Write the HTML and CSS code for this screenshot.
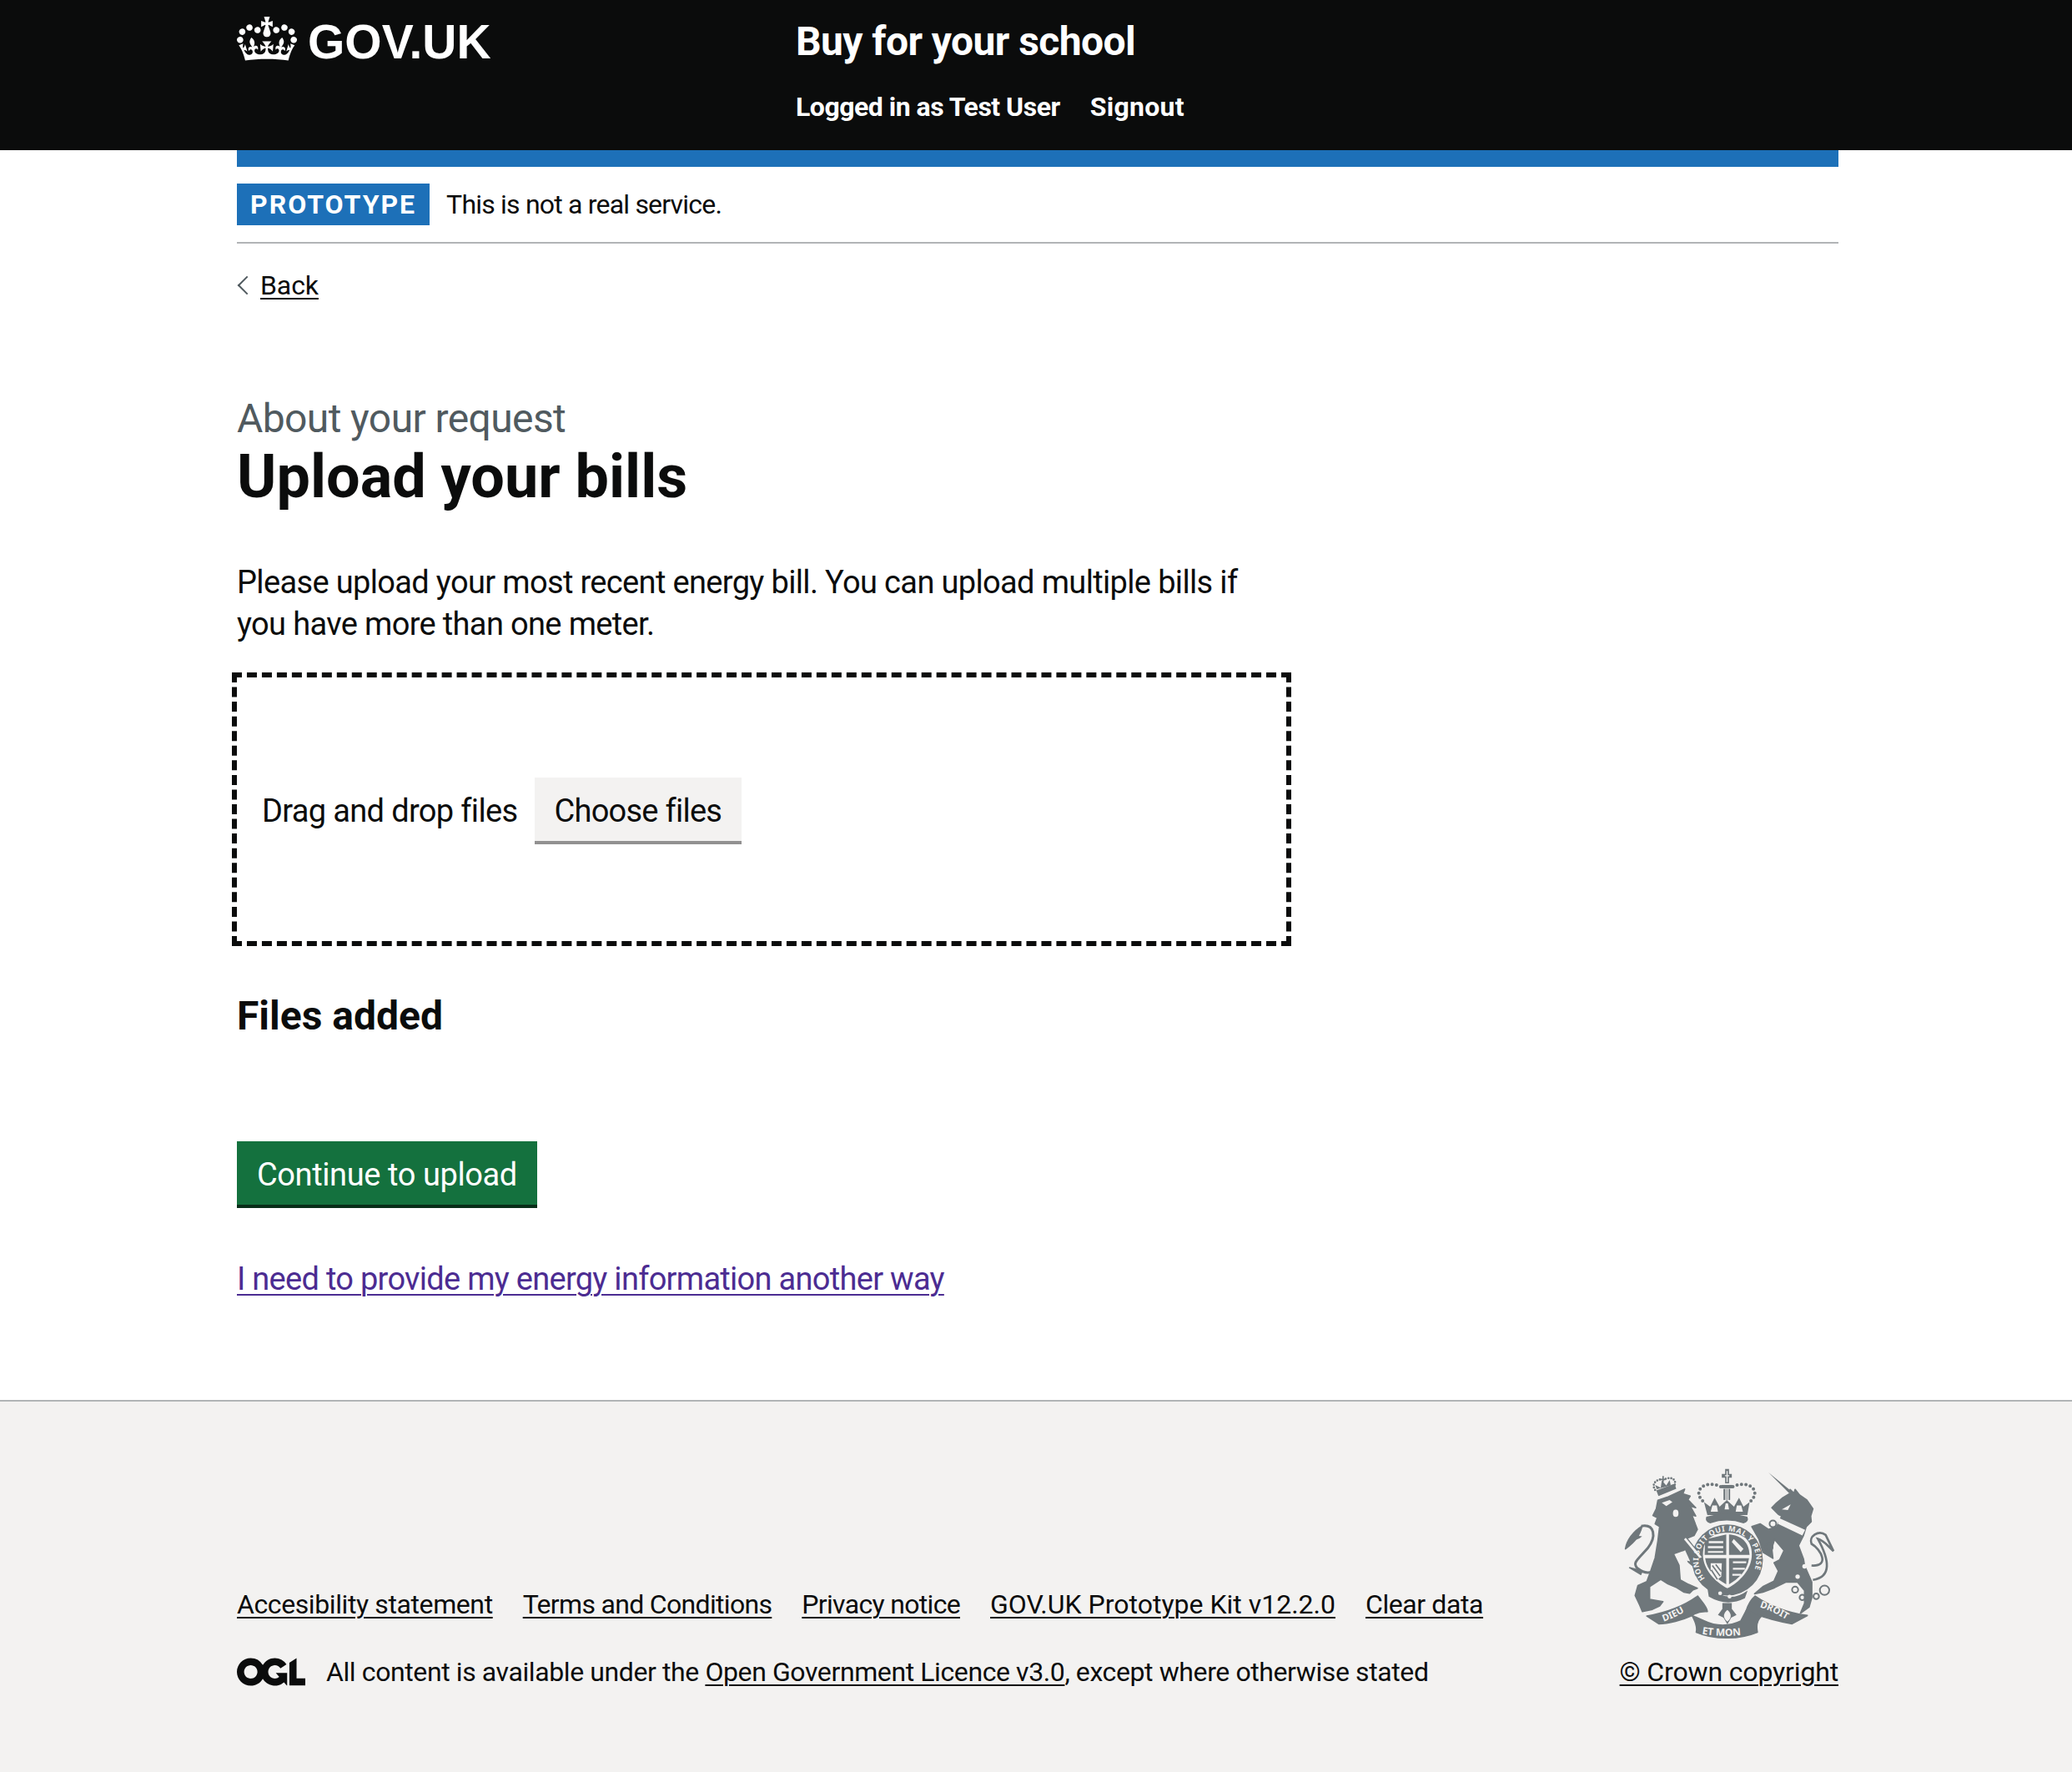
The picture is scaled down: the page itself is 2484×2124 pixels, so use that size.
FILE: index.html
```html
<!DOCTYPE html>
<html lang="en">
<head>
  <meta charset="UTF-8">
  <title>Upload your bills - Buy for your school</title>
  <link rel="stylesheet" href="styles.css">
</head>
<body>
  <header class="header">
    <div class="container header-inner">
      <div class="header-logo">
        <svg class="crown" viewBox="0 0 132 97" xmlns="http://www.w3.org/2000/svg">
          <path fill="#fff" fill-rule="evenodd" d="M25 30.2c3.5 1.5 7.7-.2 9.1-3.7 1.5-3.6-.2-7.8-3.9-9.2-3.6-1.4-7.6.3-9.1 3.9-1.4 3.5.3 7.5 3.9 9zM9 39.5c3.6 1.5 7.8-.2 9.2-3.7 1.5-3.6-.2-7.8-3.9-9.1-3.6-1.5-7.6.2-9.1 3.8-1.4 3.5.3 7.5 3.8 9zM4.4 57.2c3.5 1.5 7.7-.2 9.1-3.8 1.5-3.6-.2-7.7-3.9-9.1-3.5-1.5-7.6.3-9.1 3.8-1.4 3.5.3 7.6 3.9 9.1zm38.3-21.4c3.5 1.5 7.7-.2 9.1-3.8 1.5-3.6-.2-7.7-3.9-9.1-3.6-1.5-7.6.3-9.1 3.8-1.3 3.6.4 7.7 3.9 9.1zm64.4-5.6c-3.6 1.5-7.8-.2-9.1-3.7-1.5-3.6.2-7.8 3.8-9.2 3.6-1.4 7.7.3 9.2 3.9 1.3 3.5-.4 7.5-3.9 9zm15.9 9.3c-3.6 1.5-7.7-.2-9.1-3.7-1.5-3.6.2-7.8 3.7-9.1 3.6-1.5 7.7.2 9.2 3.8 1.5 3.5-.3 7.5-3.8 9zm4.7 17.7c-3.6 1.5-7.8-.2-9.2-3.8-1.5-3.6.2-7.7 3.9-9.1 3.6-1.5 7.7.3 9.2 3.8 1.3 3.5-.4 7.6-3.9 9.1zM89.3 35.8c-3.6 1.5-7.8-.2-9.2-3.8-1.4-3.6.2-7.7 3.9-9.1 3.6-1.5 7.7.3 9.2 3.8 1.4 3.6-.3 7.7-3.9 9.1zM69.7 17.7l8.9 4.7V9.3l-8.9 2.8c-.2-.3-.5-.6-.9-.9L72.4 0H59.6l3.5 11.2c-.3.3-.6.5-.9.9l-8.8-2.8v13.1l8.8-4.7c.3.3.6.7.9.9l-5 15.4v.1c-.2.8-.4 1.6-.4 2.4 0 4.1 3.1 7.5 7 8.1h.2c.3 0 .7.1 1 .1.4 0 .7 0 1-.1h.2c4-.6 7.1-4.1 7.1-8.1 0-.8-.1-1.7-.4-2.4V34l-5.1-15.4c.4-.2.7-.6 1-.9zM66 92.8c16.9 0 32.8 1.1 47.1 3.2 4-16.9 8.9-26.7 14-33.5l-9.6-3.4c1 4.9 1.1 7.2 0 10.2-1.5-1.4-3-4.3-4.2-8.7L108.6 76c2.8-2 5-3.2 7.5-3.3-4.4 9.4-10 11.9-13.6 11.2-4.3-.8-6.3-4.6-5.6-7.9 1-4.7 5.7-5.9 8-.5 4.3-8.7-3-11.4-7.6-8.8 7.1-7.2 7.9-13.5 2.1-21.1-8 6.1-8.1 12.3-4.5 20.8-4.7-5.4-12.1-2.5-9.5 6.2 3.4-5.2 7.9-2 7.2 3.1-.6 4.3-6.4 7.8-13.5 7.2-10.3-.9-10.9-8-11.2-13.8 2.5-.5 7.1 1.8 11 7.3L80.2 60c-4.1 4.4-8 5.3-12.3 5.4 1.4-4.4 8-11.6 8-11.6H55.5s6.4 7.2 7.9 11.6c-4.2-.1-8-1-12.3-5.4l1.4 16.4c3.9-5.5 8.5-7.7 10.9-7.3-.3 5.8-.9 12.8-11.1 13.8-7.2.6-12.9-2.9-13.5-7.2-.7-5 3.8-8.3 7.1-3.1 2.7-8.7-4.6-11.6-9.4-6.2 3.7-8.5 3.6-14.7-4.6-20.8-5.8 7.6-5 13.9 2.2 21.1-4.7-2.6-11.9.1-7.7 8.8 2.3-5.5 7.1-4.2 8.1.5.7 3.3-1.3 7.1-5.7 7.9-3.5.7-9-1.8-13.5-11.2 2.5.1 4.7 1.3 7.5 3.3l-4.7-15.4c-1.2 4.4-2.7 7.2-4.3 8.7-1.1-3-.9-5.3 0-10.2l-9.5 3.4c5 6.9 9.9 16.7 14 33.5 14.8-2.1 30.8-3.2 47.7-3.2z"/>
        </svg>
        <span class="logotype">GOV.UK</span>
      </div>
      <div class="header-content">
        <div class="service-name">Buy for your school</div>
        <nav class="header-nav">
          <span>Logged in as Test User</span>
          <span class="signout">Signout</span>
        </nav>
      </div>
    </div>
  </header>

  <div class="container">
    <div class="phase-banner">
      <strong class="tag">Prototype</strong>
      <span class="phase-text">This is not a real service.</span>
    </div>

    <a class="back-link" href="#">Back</a>

    <main class="main">
      <span class="caption">About your request</span>
      <h1 class="title">Upload your bills</h1>
      <p class="body-text">Please upload your most recent energy bill. You can upload multiple bills if you have more than one meter.</p>

      <div class="dropzone">
        <span>Drag and drop files</span>
        <button class="btn btn-secondary" type="button">Choose files</button>
      </div>

      <h2 class="files-title">Files added</h2>

      <button class="btn btn-primary" type="button">Continue to upload</button>

      <p class="other-way"><a href="#">I need to provide my energy information another way</a></p>
    </main>
  </div>

  <footer class="footer">
    <div class="container footer-inner">
      <div class="footer-meta">
        <ul class="footer-links">
          <li><a href="#">Accesibility statement</a></li>
          <li class="tight"><a href="#">Terms and Conditions</a></li>
          <li class="tight"><a href="#">Privacy notice</a></li>
          <li class="loose"><a href="#">GOV.UK Prototype Kit v12.2.0</a></li>
          <li><a href="#">Clear data</a></li>
        </ul>
        <div class="licence">
          <svg class="ogl" viewBox="0 0 483.2 195.7" xmlns="http://www.w3.org/2000/svg">
            <path fill="#0b0c0c" d="M421.5 142.8V.1l-50.7 32.3v161.1h112.4v-50.7zm-122.3-9.6A47.12 47.12 0 0 1 221 97.8c0-26 21.1-47.1 47.1-47.1 16.7 0 31.4 8.7 39.7 21.8l42.7-27.2A97.63 97.63 0 0 0 268.1 0c-36.5 0-68.3 20.1-85.1 49.7A98 98 0 0 0 97.8 0C43.9 0 0 43.9 0 97.8s43.9 97.8 97.8 97.8c36.5 0 68.3-20.1 85.1-49.7a97.76 97.76 0 0 0 149.6 25.4l19.4 22.2h3v-87.8h-80l24.3 27.5zM97.8 145c-26 0-47.1-21.1-47.1-47.1s21.1-47.1 47.1-47.1 47.2 21 47.2 47S123.8 145 97.8 145"/>
          </svg>
          <span>All content is available under the <a href="#">Open Government Licence v3.0</a>, except where otherwise stated</span>
        </div>
      </div>
      <div class="footer-crest">
        <svg class="crest" viewBox="140 85 760 620" xmlns="http://www.w3.org/2000/svg">
          <defs>
            <path id="garter" d="M432 487 A104 104 0 1 1 592 487"/>
            <path id="ribbon-left" d="M283 642 Q335 624 385 590"/>
            <path id="ribbon-mid" d="M420 686 Q510 702 598 684"/>
            <path id="ribbon-right" d="M628 590 Q690 610 745 648"/>
          </defs>
          <g class="crest-soft">
            <!-- lion -->
            <path d="M262 205 L300 192 L358 165 L352 182 L378 190 L370 203 L398 232 L378 226 L398 262 L384 258 L404 310 L392 332 L366 342 L398 382 L416 420 L416 448 L396 448 L372 428 L352 386 L318 398 L338 440 L342 492 L372 508 L404 522 L388 528 L376 540 L356 536 L330 520 L298 506 L272 490 L232 516 L232 562 L280 570 L268 586 L242 598 L206 606 L196 582 L180 548 L190 512 L222 498 L236 460 L252 412 L262 350 L268 300 L252 290 L260 268 L244 260 L256 236 Z"/>
            <path d="M145 380 C150 350 172 318 205 298 C196 330 184 352 145 380 Z"/>
            <path d="M160 448 L205 460 L200 472 Z"/>
            <!-- unicorn -->
            <path d="M738 166 L752 180 L756 166 L772 186 L798 204 L820 236 L812 262 L814 282 L796 300 L786 332 L768 368 L786 416 L790 440 L816 500 L816 556 L806 590 L775 612 L790 576 L790 530 L765 500 L722 500 L682 520 L640 536 L610 542 L640 516 L680 496 L696 460 L680 430 L700 420 L716 386 L682 346 L672 378 L676 414 L640 392 L626 346 L600 300 L630 290 L660 310 L690 300 L708 262 L696 256 L672 232 L688 216 L712 196 L738 180 Z"/>
            <!-- ribbons -->
            <path d="M222 622 C290 610 350 590 405 550 C420 570 440 590 440 606 C410 604 395 612 385 620 C350 636 300 650 265 650 Z"/>
            <path d="M385 620 C395 640 405 660 400 680 C470 710 560 705 620 680 C615 655 620 635 635 622 C605 600 590 610 580 602 L560 640 C520 660 470 660 430 640 Z"/>
            <path d="M580 602 C590 572 600 560 612 550 C670 590 730 610 800 620 L745 650 C690 640 640 625 635 622 Z"/>
          </g>
          <g fill="#6f777b">
            <path d="M660 105 L742 172 L735 180 Z"/>
            <path d="M202 298 C250 290 258 335 225 378 C190 418 168 430 188 450 C204 462 225 470 240 462" fill="none" stroke="#6f777b" stroke-width="9"/>
            <path d="M160 350 C180 350 195 345 205 335 C190 330 175 335 160 350 Z"/>
            <path d="M815 440 C882 445 850 382 815 362 C804 336 840 310 866 330 L894 388 C870 366 860 350 838 344 C880 420 888 482 820 492" fill="none" stroke="#6f777b" stroke-width="8"/>
            <!-- lion crown -->
            <path d="M256 170 L322 146 L328 164 L264 190 Z"/>
            <path d="M258 165 L252 150 L272 160 L276 134 L292 152 L304 132 L308 150 L322 148 Z"/>
            <path d="M272 128 H278 V118 H283 V128 H289 V133 H283 V140 H278 V133 H272 Z"/>
            <path d="M252 168 C238 148 254 132 272 130 M290 128 C310 120 330 130 322 152" fill="none" stroke="#6f777b" stroke-width="8" stroke-linecap="round" stroke-dasharray="0 10"/>
            <!-- royal crown -->
            <path d="M492 110 H504 V92 H518 V110 H528 V124 H518 V144 H504 V124 H492 Z"/>
            <path d="M490 150 H530 V162 H490 Z"/>
            <path d="M498 164 H522 V204 H498 Z"/>
            <path d="M428 212 L450 228 L466 196 L484 228 L510 204 L536 228 L554 196 L570 228 L592 212 L584 258 L440 258 Z"/>
            <path d="M436 264 Q510 244 584 264 Q592 282 570 288 Q510 268 450 288 Q430 282 436 264 Z"/>
            <path d="M488 156 C450 138 402 150 410 190 L428 214 M532 156 C570 138 618 150 610 190 L592 214" fill="none" stroke="#6f777b" stroke-width="12" stroke-linecap="round" stroke-dasharray="0 16"/>
            <!-- garter -->
            <circle cx="512" cy="420" r="128"/>
            <path d="M438 508 Q510 585 585 530 L575 558 Q510 590 445 552 Z"/>
            <!-- fleur de lis -->
            <path d="M494 575 H528 V596 L545 618 L526 628 L512 652 L498 628 L478 618 L494 596 Z"/>
            <!-- chains -->
            <g fill="none" stroke="#6f777b" stroke-width="6">
              <circle cx="676" cy="290" r="12"/><circle cx="662" cy="375" r="13"/>
              <circle cx="756" cy="527" r="11"/><circle cx="782" cy="555" r="10"/>
              <circle cx="832" cy="551" r="10"/><circle cx="862" cy="529" r="17"/>
            </g>
          </g>
          <g fill="#f3f2f1">
            <!-- collar -->
            <path d="M696 268 L792 312 L782 332 L694 290 Z"/>
            <circle cx="796" cy="398" r="10"/><circle cx="790" cy="443" r="8"/><circle cx="765" cy="480" r="8"/>
            <path d="M708 238 L740 220 L730 240 Z"/>
            <!-- lion face -->
            <path d="M276 214 L304 204 L314 212 L292 226 Z"/>
            <ellipse cx="326" cy="252" rx="10" ry="13"/>
            <path d="M362 340 L420 410 L412 414 L356 346 Z"/>
            <path d="M340 395 L360 385 L378 425 L352 420 Z"/>
            <!-- crown details -->
            <path d="M503 115 H519 V119 H503 Z M509 100 H513 V140 H509 Z"/>
            <path d="M505 164 H509 V204 H505 Z M512 164 H516 V204 H512 Z"/>
            <path d="M506 216 L514 216 L518 238 L502 238 Z M458 224 L474 224 L478 246 L452 246 Z M546 224 L562 224 L568 246 L542 246 Z"/>
            <!-- garter studs -->
            <circle cx="486" cy="540" r="7"/><circle cx="520" cy="552" r="7"/>
            <path d="M512 600 C500 610 492 625 512 642 C532 625 524 610 512 600 Z"/>
            <!-- shield -->
            <path d="M512 322 C460 322 424 345 424 400 C424 455 470 500 512 522 C555 500 600 455 600 400 C600 345 565 322 512 322 Z"/>
          </g>
          <path fill="#6f777b" d="M432 346 L508 328 V402 H430 Z M518 328 C560 332 590 352 592 402 H518 Z M432 414 H508 V508 C475 490 438 460 432 414 Z M518 414 H590 C585 458 550 490 518 508 Z"/>
          <g fill="#f3f2f1">
            <path d="M445 352 H497 V360 H445 Z M442 370 H497 V378 H442 Z M442 388 H497 V394 H442 Z M532 425 H580 V432 H532 Z M532 448 H575 V455 H532 Z M530 470 H562 V477 H530 Z"/>
            <path d="M535 345 L570 380 L560 392 L528 355 Z"/>
            <path d="M452 432 L492 432 L490 480 L472 495 L452 470 Z"/>
          </g>
          <path d="M458 440 L486 478 M470 436 L490 462 M454 456 L476 490" stroke="#6f777b" stroke-width="5" fill="none"/>
          <g class="crest-text">
            <text font-size="27" letter-spacing="2"><textPath href="#garter">HONI SOIT QUI MAL Y PENSE</textPath></text>
            <text font-size="34"><textPath href="#ribbon-left">DIEU</textPath></text>
            <text font-size="36"><textPath href="#ribbon-mid">ET MON</textPath></text>
            <text font-size="34"><textPath href="#ribbon-right">DROIT</textPath></text>
          </g>
        </svg>
        <a class="copyright" href="#">© Crown copyright</a>
      </div>
    </div>
  </footer>
</body>
</html>
```

FILE: styles.css
```css
html, body {
  margin: 0;
  padding: 0;
}

body {
  background-color: #fff;
  color: #0b0c0c;
  font-family: Roboto, sans-serif;
  font-size: 38px;
  line-height: 50px;
  letter-spacing: -0.65px;
}

a {
  color: #0b0c0c;
  text-decoration: underline;
  text-decoration-thickness: 2px;
  text-underline-offset: 0.13em;
}

.container {
  width: 1920px;
  margin-left: 284px;
}

/* header */
.header {
  background-color: #0b0c0c;
  border-bottom: 20px solid #fff;
  color: #fff;
}

.header-inner {
  display: flex;
  height: 160px;
  padding-top: 20px;
  margin-bottom: -20px;
  border-bottom: 20px solid #1d70b8;
}

.header-logo {
  display: flex;
  align-items: flex-start;
  width: 670px;
}

.crown {
  width: 72px;
  height: 53px;
  margin-right: 13px;
}

.logotype {
  font-family: "Liberation Sans", sans-serif;
  font-weight: bold;
  font-size: 57px;
  line-height: 60px;
  letter-spacing: 0;
}

.service-name {
  font-size: 48px;
  font-weight: bold;
  line-height: 60px;
  letter-spacing: -0.58px;
}

.header-nav {
  display: flex;
  gap: 36px;
  margin-top: 28px;
  font-size: 32px;
  font-weight: bold;
  line-height: 40px;
  letter-spacing: -0.5px;
}

.signout {
  letter-spacing: 0.3px;
}

/* phase banner */
.phase-banner {
  display: flex;
  align-items: center;
  gap: 20px;
  padding: 20px 0;
  border-bottom: 2px solid #b1b4b6;
  font-size: 32px;
  line-height: 50px;
}

.tag {
  padding: 0 16px;
  background-color: #1d70b8;
  color: #fff;
  font-weight: bold;
  letter-spacing: 2px;
  text-transform: uppercase;
}

.phase-text {
  letter-spacing: -0.8px;
}

/* back link */
.back-link {
  display: block;
  position: relative;
  width: fit-content;
  margin-top: 30px;
  padding-left: 28px;
  font-size: 32px;
  line-height: 40px;
  letter-spacing: -0.1px;
}

.back-link:before {
  content: "";
  position: absolute;
  left: 4px;
  top: 12px;
  width: 14px;
  height: 14px;
  border-left: 2px solid #505a5f;
  border-bottom: 2px solid #505a5f;
  transform: rotate(45deg);
}

/* main */
.main {
  padding: 115px 0 0;
}

.caption {
  display: block;
  color: #505a5f;
  font-size: 48px;
  line-height: 50px;
  letter-spacing: -0.6px;
}

.title {
  margin: 0 0 56px;
  font-size: 72px;
  line-height: 90px;
  font-weight: bold;
  letter-spacing: 0;
}

.body-text {
  width: 1260px;
  margin: 0 0 33px;
}

.dropzone {
  display: flex;
  align-items: center;
  gap: 20px;
  box-sizing: border-box;
  width: 1270px;
  height: 328px;
  margin-left: -6px;
  padding: 3px 0 0 30px;
  border: 6px dashed #0b0c0c;
}

.btn {
  border: 0;
  border-radius: 0;
  font-family: inherit;
  font-size: 38px;
  line-height: 50px;
  padding: 15px 24px 11px;
}

.btn-secondary {
  background-color: #f3f2f1;
  color: #0b0c0c;
  border-bottom: 4px solid #929191;
  letter-spacing: -0.75px;
}

.btn-primary {
  display: block;
  background-color: #14713e;
  color: #fff;
  border-bottom: 4px solid #082d18;
  letter-spacing: -0.4px;
}

.files-title {
  margin: 54px 0 120px;
  font-size: 48px;
  line-height: 60px;
  font-weight: bold;
  letter-spacing: 0;
}

.other-way {
  margin: 60px 0 120px;
  letter-spacing: -0.71px;
}

.other-way a {
  color: #4c2c92;
}

/* footer */
.footer {
  background-color: #f3f2f1;
  border-top: 2px solid #b1b4b6;
  padding: 80px 0 100px;
  font-size: 32px;
  line-height: 40px;
  letter-spacing: -0.4px;
}

.footer-inner {
  display: flex;
  justify-content: space-between;
  align-items: flex-end;
}

.footer-links {
  display: flex;
  gap: 36px;
  list-style: none;
  margin: 0 0 41px;
  padding: 0;
}

.footer-links .tight {
  letter-spacing: -0.68px;
}

.footer-links .loose {
  letter-spacing: 0;
}

.licence {
  display: flex;
  align-items: center;
  gap: 25px;
}

.ogl {
  width: 82px;
  height: 34px;
}

.footer-crest {
  display: flex;
  flex-direction: column;
  align-items: flex-end;
}

.crest {
  width: 253px;
  height: 207px;
  margin: -2px 4px 19px 0;
}

.crest-soft {
  fill: #6f777b;
  stroke: #6f777b;
  stroke-width: 5px;
  stroke-linejoin: round;
}

.crest-text {
  fill: #f3f2f1;
  font-family: "Noto Sans", sans-serif;
  font-weight: bold;
  letter-spacing: 0;
}

.copyright {
  letter-spacing: -0.15px;
}
```
